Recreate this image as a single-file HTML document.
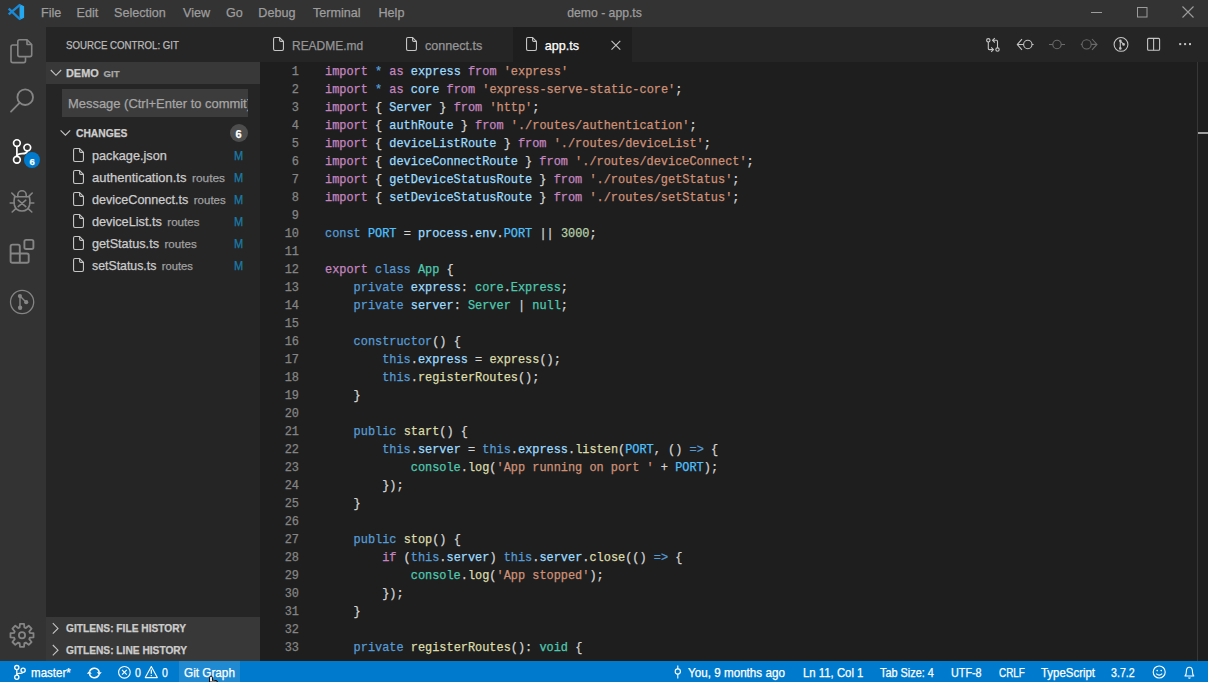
<!DOCTYPE html>
<html><head><meta charset="utf-8"><style>
html,body{margin:0;padding:0;width:1208px;height:682px;overflow:hidden;background:#1E1E1E}
.r{position:absolute;display:block;overflow:visible}
.t{position:absolute;white-space:pre;-webkit-text-stroke:0.25px currentColor}
</style></head><body>
<div class="r" style="left:0px;top:0px;width:1208px;height:27px;background:#333333;"></div>
<div class="r" style="left:0px;top:27px;width:46px;height:634px;background:#333333;"></div>
<div class="r" style="left:46px;top:27px;width:214px;height:634px;background:#252526;"></div>
<div class="r" style="left:260px;top:27px;width:948px;height:35px;background:#252526;"></div>
<div class="r" style="left:260px;top:62px;width:948px;height:599px;background:#1E1E1E;"></div>
<div class="r" style="left:0px;top:661px;width:1208px;height:21px;background:#007ACC;"></div>
<svg class="r" style="left:0px;top:0px;" width="40" height="27" viewBox="0 0 40 27">
<path d="M19.5 4 L24.1 6.3 V17.8 L19.5 20.1 Z" fill="#24A8F0"/>
<path d="M20.2 4.6 L8.7 14.3 M8.7 8.7 L20.2 19.5" stroke="#1A8AD8" stroke-width="2.4"/>
</svg>
<div class="t" style="left:41px;top:4.23px;font-size:12.6px;line-height:18px;color:#9D9D9D;font-weight:400;font-family:'Liberation Sans', sans-serif;">File</div>
<div class="t" style="left:76.5px;top:4.23px;font-size:12.6px;line-height:18px;color:#9D9D9D;font-weight:400;font-family:'Liberation Sans', sans-serif;">Edit</div>
<div class="t" style="left:114px;top:4.23px;font-size:12.6px;line-height:18px;color:#9D9D9D;font-weight:400;font-family:'Liberation Sans', sans-serif;">Selection</div>
<div class="t" style="left:183px;top:4.23px;font-size:12.6px;line-height:18px;color:#9D9D9D;font-weight:400;font-family:'Liberation Sans', sans-serif;">View</div>
<div class="t" style="left:226px;top:4.23px;font-size:12.6px;line-height:18px;color:#9D9D9D;font-weight:400;font-family:'Liberation Sans', sans-serif;">Go</div>
<div class="t" style="left:258.3px;top:4.23px;font-size:12.6px;line-height:18px;color:#9D9D9D;font-weight:400;font-family:'Liberation Sans', sans-serif;">Debug</div>
<div class="t" style="left:313px;top:4.23px;font-size:12.6px;line-height:18px;color:#9D9D9D;font-weight:400;font-family:'Liberation Sans', sans-serif;">Terminal</div>
<div class="t" style="left:378.5px;top:4.23px;font-size:12.6px;line-height:18px;color:#9D9D9D;font-weight:400;font-family:'Liberation Sans', sans-serif;">Help</div>
<div class="t" style="left:567.3px;top:4.87px;font-size:12.2px;line-height:17px;color:#9D9D9D;font-weight:400;font-family:'Liberation Sans', sans-serif;">demo - app.ts</div>
<svg class="r" style="left:1080px;top:0px;" width="128" height="27" viewBox="1080 0 128 27">
<path d="M1091 12.5 H1102" stroke="#9D9D9D" stroke-width="1"/>
<rect x="1137.5" y="7.5" width="9.5" height="9.5" fill="none" stroke="#9D9D9D" stroke-width="1"/>
<path d="M1182.5 6.5 L1193.5 17.5 M1193.5 6.5 L1182.5 17.5" stroke="#9D9D9D" stroke-width="1.1"/>
</svg>
<svg class="r" style="left:0px;top:27px;" width="46" height="634" viewBox="0 27 46 634">
<g fill="none" stroke="#858585" stroke-width="1.6" stroke-linejoin="round">
  <path d="M17.5 45 H12.8 Q11 45 11 46.8 V60.8 Q11 62.6 12.8 62.6 H23.7 Q25.5 62.6 25.5 60.8 V57.2"/>
  <path d="M19.6 39.8 H27 L31.7 44.5 V54.8 Q31.7 56.6 29.9 56.6 H19.6 Q17.8 56.6 17.8 54.8 V41.6 Q17.8 39.8 19.6 39.8 Z"/>
  <path d="M27 39.8 V44.5 H31.7" />
</g>
<g fill="none" stroke="#858585" stroke-width="1.8">
  <circle cx="25.2" cy="97.2" r="7.8"/>
  <path d="M19.8 102.6 L11 111.6" stroke-linecap="round"/>
</g>
<g fill="none" stroke="#FFFFFF" stroke-width="1.7">
  <circle cx="16.9" cy="143.1" r="3.35"/>
  <circle cx="27.3" cy="147.6" r="3.35"/>
  <circle cx="16.9" cy="159.8" r="3.35"/>
  <path d="M16.9 146.5 V156.4"/>
  <path d="M27.3 151 Q26.8 153.6 22 153.7 Q17.6 153.8 16.9 156"/>
</g>
<circle cx="31.95" cy="160" r="8" fill="#007ACC"/>
<g fill="none" stroke="#858585" stroke-width="1.6" stroke-linecap="round">
  <path d="M17.8 196.6 V195 A4.2 4.2 0 0 1 26.2 195 V196.6"/>
  <path d="M14.6 196.8 H29.4 Q30.4 201 29.6 205 Q28.2 211 22 211 Q15.8 211 14.4 205 Q13.6 201 14.6 196.8 Z" stroke-linejoin="round"/>
  <path d="M18.2 200.2 L25.8 206.6 M25.8 200.2 L18.2 206.6"/>
  <path d="M11.8 193 L15.2 196.4 M32.2 193 L28.8 196.4 M10.2 203 H13.8 M33.8 203 H30.2 M12.2 212 L15.8 208.6 M31.8 212 L28.2 208.6"/>
</g>
<g fill="none" stroke="#858585" stroke-width="1.9" stroke-linejoin="round">
  <path d="M12.5 244.6 H18 Q19.8 244.6 19.8 246.4 V253.5 H26.9 Q28.7 253.5 28.7 255.3 V261 Q28.7 262.8 26.9 262.8 H12.5 Q10.6 262.8 10.6 261 V246.4 Q10.6 244.6 12.5 244.6 Z"/>
  <path d="M10.6 253.5 H19.8 V262.8"/>
  <rect x="24.4" y="239.9" width="9" height="9.1" rx="1.8"/>
</g>
<g fill="none" stroke="#858585">
  <circle cx="22.1" cy="302" r="11.6" stroke-width="1.3"/>
  <path d="M20 296.1 V307.8 M20 296.1 L26.2 302.2" stroke-width="1.4"/>
</g>
<g fill="#858585">
  <circle cx="19.9" cy="296.1" r="2.1"/>
  <circle cx="26.2" cy="302.2" r="2.1"/>
  <circle cx="20.1" cy="307.8" r="2.2"/>
</g>
</svg>
<div class="t" style="left:29.6px;top:154.71px;font-size:9.5px;line-height:13px;color:#FFFFFF;font-weight:700;font-family:'Liberation Sans', sans-serif;">6</div>
<svg class="r" style="left:0px;top:600px;" width="46" height="60" viewBox="0 600 46 60">
<path d="M19.60 627.46 L19.97 623.78 L24.03 623.78 L24.40 627.46 L25.85 628.06 L28.71 625.72 L31.58 628.59 L29.24 631.45 L29.84 632.90 L33.52 633.27 L33.52 637.33 L29.84 637.70 L29.24 639.15 L31.58 642.01 L28.71 644.88 L25.85 642.54 L24.40 643.14 L24.03 646.82 L19.97 646.82 L19.60 643.14 L18.15 642.54 L15.29 644.88 L12.42 642.01 L14.76 639.15 L14.16 637.70 L10.48 637.33 L10.48 633.27 L14.16 632.90 L14.76 631.45 L12.42 628.59 L15.29 625.72 L18.15 628.06 Z" fill="none" stroke="#858585" stroke-width="1.8" stroke-linejoin="round"/>
<circle cx="22" cy="635.3" r="3.1" fill="none" stroke="#858585" stroke-width="1.8"/>
</svg>
<div class="t" style="left:66px;top:37.32px;font-size:11.2px;line-height:16px;color:#BBBBBB;font-weight:400;font-family:'Liberation Sans', sans-serif;transform:scaleX(0.865);transform-origin:0 0;">SOURCE CONTROL: GIT</div>
<div class="r" style="left:46px;top:62px;width:214px;height:22px;background:#383838;"></div>
<svg class="r" style="left:46px;top:62px;" width="214" height="22" viewBox="46 62 214 22"><path d="M50.8 70 L56 75.3 L61.2 70" fill="none" stroke="#C5C5C5" stroke-width="1.1"/></svg>
<div class="t" style="left:66px;top:66.32px;font-size:10.9px;line-height:15px;color:#CCCCCC;font-weight:700;font-family:'Liberation Sans', sans-serif;">DEMO</div>
<div class="t" style="left:103.5px;top:66.97px;font-size:9.6px;line-height:13px;color:#A8A8A8;font-weight:700;font-family:'Liberation Sans', sans-serif;">GIT</div>
<div class="r" style="left:62px;top:89px;width:186px;height:28px;background:#3C3C3C;"></div>
<div class="r" style="left:62px;top:89px;width:186px;height:28px;overflow:hidden">
<div class="t" style="left:5.5px;top:5.70px;font-size:12.7px;line-height:18px;color:#A6A6A6;font-weight:400;font-family:'Liberation Sans', sans-serif;transform:scaleX(1.02);transform-origin:0 0;">Message (Ctrl+Enter to commit)</div>
</div>
<svg class="r" style="left:46px;top:122px;" width="214" height="22" viewBox="46 122 214 22"><path d="M60.6 130.4 L65.4 135.2 L70.2 130.4" fill="none" stroke="#C5C5C5" stroke-width="1.1"/><circle cx="239" cy="133" r="9" fill="#4D4D4D"/></svg>
<div class="t" style="left:76px;top:127.03px;font-size:10.3px;line-height:14px;color:#CCCCCC;font-weight:700;font-family:'Liberation Sans', sans-serif;">CHANGES</div>
<div class="t" style="left:235.6px;top:126.59px;font-size:11px;line-height:15px;color:#FFFFFF;font-weight:700;font-family:'Liberation Sans', sans-serif;">6</div>
<div class="t" style="left:92px;top:146.80px;font-size:12.7px;line-height:18px;color:#CCCCCC;font-weight:400;font-family:'Liberation Sans', sans-serif;transform:scaleX(1);transform-origin:0 0;">package.json</div>
<div class="t" style="left:233.8px;top:147.06px;font-size:12.8px;line-height:18px;color:#1A7DA6;font-weight:400;font-family:'Liberation Sans', sans-serif;transform:scaleX(0.86);transform-origin:0 0;">M</div>
<div class="t" style="left:92px;top:168.80px;font-size:12.7px;line-height:18px;color:#CCCCCC;font-weight:400;font-family:'Liberation Sans', sans-serif;transform:scaleX(1.022);transform-origin:0 0;">authentication.ts<span style="font-size:11.6px;color:#A0A0A0;margin-left:5.5px">routes</span></div>
<div class="t" style="left:233.8px;top:169.06px;font-size:12.8px;line-height:18px;color:#1A7DA6;font-weight:400;font-family:'Liberation Sans', sans-serif;transform:scaleX(0.86);transform-origin:0 0;">M</div>
<div class="t" style="left:92px;top:190.80px;font-size:12.7px;line-height:18px;color:#CCCCCC;font-weight:400;font-family:'Liberation Sans', sans-serif;transform:scaleX(0.99);transform-origin:0 0;">deviceConnect.ts<span style="font-size:11.6px;color:#A0A0A0;margin-left:5.5px">routes</span></div>
<div class="t" style="left:233.8px;top:191.06px;font-size:12.8px;line-height:18px;color:#1A7DA6;font-weight:400;font-family:'Liberation Sans', sans-serif;transform:scaleX(0.86);transform-origin:0 0;">M</div>
<div class="t" style="left:92px;top:212.80px;font-size:12.7px;line-height:18px;color:#CCCCCC;font-weight:400;font-family:'Liberation Sans', sans-serif;transform:scaleX(1);transform-origin:0 0;">deviceList.ts<span style="font-size:11.6px;color:#A0A0A0;margin-left:5.5px">routes</span></div>
<div class="t" style="left:233.8px;top:213.06px;font-size:12.8px;line-height:18px;color:#1A7DA6;font-weight:400;font-family:'Liberation Sans', sans-serif;transform:scaleX(0.86);transform-origin:0 0;">M</div>
<div class="t" style="left:92px;top:234.80px;font-size:12.7px;line-height:18px;color:#CCCCCC;font-weight:400;font-family:'Liberation Sans', sans-serif;transform:scaleX(1);transform-origin:0 0;">getStatus.ts<span style="font-size:11.6px;color:#A0A0A0;margin-left:5.5px">routes</span></div>
<div class="t" style="left:233.8px;top:235.06px;font-size:12.8px;line-height:18px;color:#1A7DA6;font-weight:400;font-family:'Liberation Sans', sans-serif;transform:scaleX(0.86);transform-origin:0 0;">M</div>
<div class="t" style="left:92px;top:256.80px;font-size:12.7px;line-height:18px;color:#CCCCCC;font-weight:400;font-family:'Liberation Sans', sans-serif;transform:scaleX(0.97);transform-origin:0 0;">setStatus.ts<span style="font-size:11.6px;color:#A0A0A0;margin-left:5.5px">routes</span></div>
<div class="t" style="left:233.8px;top:257.06px;font-size:12.8px;line-height:18px;color:#1A7DA6;font-weight:400;font-family:'Liberation Sans', sans-serif;transform:scaleX(0.86);transform-origin:0 0;">M</div>
<svg class="r" style="left:46px;top:140px;" width="214" height="140" viewBox="46 140 214 140"><path d="M74.9 148.55 H79.6 L83.45 152.4 V160.1 Q83.45 161.45 82.1 161.45 H74.9 Q73.55 161.45 73.55 160.1 V149.9 Q73.55 148.55 74.9 148.55 Z" fill="none" stroke="#C5C5C5" stroke-width="1.1" stroke-linejoin="round"/><path d="M79.6 148.55 V151.3 Q79.6 152.4 80.7 152.4 H83.45" fill="none" stroke="#C5C5C5" stroke-width="1.1"/><path d="M74.9 170.55 H79.6 L83.45 174.4 V182.1 Q83.45 183.45 82.1 183.45 H74.9 Q73.55 183.45 73.55 182.1 V171.9 Q73.55 170.55 74.9 170.55 Z" fill="none" stroke="#C5C5C5" stroke-width="1.1" stroke-linejoin="round"/><path d="M79.6 170.55 V173.3 Q79.6 174.4 80.7 174.4 H83.45" fill="none" stroke="#C5C5C5" stroke-width="1.1"/><path d="M74.9 192.55 H79.6 L83.45 196.4 V204.1 Q83.45 205.45 82.1 205.45 H74.9 Q73.55 205.45 73.55 204.1 V193.9 Q73.55 192.55 74.9 192.55 Z" fill="none" stroke="#C5C5C5" stroke-width="1.1" stroke-linejoin="round"/><path d="M79.6 192.55 V195.3 Q79.6 196.4 80.7 196.4 H83.45" fill="none" stroke="#C5C5C5" stroke-width="1.1"/><path d="M74.9 214.55 H79.6 L83.45 218.4 V226.1 Q83.45 227.45 82.1 227.45 H74.9 Q73.55 227.45 73.55 226.1 V215.9 Q73.55 214.55 74.9 214.55 Z" fill="none" stroke="#C5C5C5" stroke-width="1.1" stroke-linejoin="round"/><path d="M79.6 214.55 V217.3 Q79.6 218.4 80.7 218.4 H83.45" fill="none" stroke="#C5C5C5" stroke-width="1.1"/><path d="M74.9 236.55 H79.6 L83.45 240.4 V248.1 Q83.45 249.45 82.1 249.45 H74.9 Q73.55 249.45 73.55 248.1 V237.9 Q73.55 236.55 74.9 236.55 Z" fill="none" stroke="#C5C5C5" stroke-width="1.1" stroke-linejoin="round"/><path d="M79.6 236.55 V239.3 Q79.6 240.4 80.7 240.4 H83.45" fill="none" stroke="#C5C5C5" stroke-width="1.1"/><path d="M74.9 258.55 H79.6 L83.45 262.4 V270.1 Q83.45 271.45 82.1 271.45 H74.9 Q73.55 271.45 73.55 270.1 V259.9 Q73.55 258.55 74.9 258.55 Z" fill="none" stroke="#C5C5C5" stroke-width="1.1" stroke-linejoin="round"/><path d="M79.6 258.55 V261.3 Q79.6 262.4 80.7 262.4 H83.45" fill="none" stroke="#C5C5C5" stroke-width="1.1"/></svg>
<div class="r" style="left:46px;top:617px;width:214px;height:44px;background:#383838;"></div>
<svg class="r" style="left:46px;top:610px;" width="214" height="51" viewBox="46 610 214 51"><path d="M52.8 623.2 L58 628.4 L52.8 633.6 M52.8 645 L58 650.2 L52.8 655.4" fill="none" stroke="#C5C5C5" stroke-width="1.1"/></svg>
<div class="t" style="left:66px;top:621.96px;font-size:10.2px;line-height:14px;color:#CCCCCC;font-weight:700;font-family:'Liberation Sans', sans-serif;">GITLENS: FILE HISTORY</div>
<div class="t" style="left:66px;top:643.76px;font-size:10.2px;line-height:14px;color:#CCCCCC;font-weight:700;font-family:'Liberation Sans', sans-serif;">GITLENS: LINE HISTORY</div>
<div class="r" style="left:513px;top:27px;width:119px;height:35px;background:#1E1E1E;"></div>
<svg class="r" style="left:260px;top:27px;" width="400" height="35" viewBox="260 27 400 35"><path d="M274.9 37.55 H279.6 L283.45 41.4 V49.1 Q283.45 50.45 282.1 50.45 H274.9 Q273.55 50.45 273.55 49.1 V38.9 Q273.55 37.55 274.9 37.55 Z" fill="none" stroke="#C5C5C5" stroke-width="1.1" stroke-linejoin="round"/><path d="M279.6 37.55 V40.3 Q279.6 41.4 280.7 41.4 H283.45" fill="none" stroke="#C5C5C5" stroke-width="1.1"/><path d="M407.9 37.55 H412.6 L416.45 41.4 V49.1 Q416.45 50.45 415.1 50.45 H407.9 Q406.55 50.45 406.55 49.1 V38.9 Q406.55 37.55 407.9 37.55 Z" fill="none" stroke="#C5C5C5" stroke-width="1.1" stroke-linejoin="round"/><path d="M412.6 37.55 V40.3 Q412.6 41.4 413.7 41.4 H416.45" fill="none" stroke="#C5C5C5" stroke-width="1.1"/><path d="M527.9 37.55 H532.6 L536.45 41.4 V49.1 Q536.45 50.45 535.1 50.45 H527.9 Q526.55 50.45 526.55 49.1 V38.9 Q526.55 37.55 527.9 37.55 Z" fill="none" stroke="#C5C5C5" stroke-width="1.1" stroke-linejoin="round"/><path d="M532.6 37.55 V40.3 Q532.6 41.4 533.7 41.4 H536.45" fill="none" stroke="#C5C5C5" stroke-width="1.1"/><path d="M611.5 40.8 L620.3 49.6 M620.3 40.8 L611.5 49.6" stroke="#C5C5C5" stroke-width="1.1"/></svg>
<div class="t" style="left:292.2px;top:36.93px;font-size:12.6px;line-height:18px;color:#969696;font-weight:400;font-family:'Liberation Sans', sans-serif;transform:scaleX(0.95);transform-origin:0 0;">README.md</div>
<div class="t" style="left:425px;top:36.93px;font-size:12.6px;line-height:18px;color:#969696;font-weight:400;font-family:'Liberation Sans', sans-serif;">connect.ts</div>
<div class="t" style="left:544.8px;top:36.93px;font-size:12.6px;line-height:18px;color:#FFFFFF;font-weight:400;font-family:'Liberation Sans', sans-serif;">app.ts</div>
<svg class="r" style="left:970px;top:27px;" width="238" height="35" viewBox="970 27 238 35">
<g fill="none" stroke="#C5C5C5" stroke-width="1.1">
  <circle cx="988.3" cy="40.3" r="1.7"/>
  <circle cx="997.5" cy="49.6" r="1.7"/>
  <path d="M988.3 42 V48.6 Q988.3 49.6 989.3 49.6 H993.4"/>
  <path d="M991.2 47.4 L993.4 49.6 L991.2 51.8"/>
  <path d="M997.5 47.9 V41.3 Q997.5 40.3 996.5 40.3 H992.6"/>
  <path d="M994.8 38.1 L992.6 40.3 L994.8 42.5"/>
</g>
<g fill="none" stroke="#C5C5C5" stroke-width="1.1">
  <circle cx="1027.8" cy="44.5" r="4.2"/>
  <path d="M1017.5 44.5 H1023.6 M1032 44.5 H1033.6 M1022 39.2 L1017.3 44.5 L1022 49.8"/>
</g>
<g fill="none" stroke="#6A6A6A" stroke-width="1.1">
  <circle cx="1057" cy="44.5" r="4.2"/>
  <path d="M1049 44.5 H1052.8 M1061.2 44.5 H1065"/>
  <circle cx="1086.6" cy="44.4" r="4.6"/>
  <path d="M1080.8 44.4 H1082 M1091.2 44.4 H1096.8 M1092 39 L1097 44.4 L1092 49.8"/>
</g>
<g fill="none" stroke="#C5C5C5" stroke-width="1.1">
  <circle cx="1121" cy="44.4" r="6.9"/>
  <path d="M1120.3 40.8 V48.4 M1120.3 40.8 L1123.6 44.4"/>
  <rect x="1147.6" y="38.4" width="12" height="11.8" rx="1"/>
  <path d="M1153.6 38.4 V50.2"/>
</g>
<g fill="#C5C5C5">
  <circle cx="1120.3" cy="40.8" r="1.3"/><circle cx="1123.6" cy="44.4" r="1.3"/><circle cx="1120.3" cy="48.4" r="1.3"/>
  <rect x="1179.2" y="43.1" width="2" height="2"/><rect x="1184.1" y="43.1" width="2" height="2"/><rect x="1189" y="43.1" width="2" height="2"/>
</g>
</svg>
<div class="r" style="left:1197px;top:62px;width:1px;height:599px;background:#373737;"></div>
<div class="r" style="left:1198px;top:132px;width:10px;height:2px;background:#A0A0A0;"></div>
<div class="r" style="left:260px;top:62px;width:937px;height:599px;overflow:hidden">
<div class="t" style="left:31.853px;top:1.93px;font-size:11.91px;line-height:17px;color:#858585;font-weight:400;font-family:'Liberation Mono', monospace;">1</div>
<div class="t" style="left:65px;top:1.93px;font-size:11.91px;line-height:17px;color:#D4D4D4;font-weight:400;font-family:'Liberation Mono', monospace;"><span style="color:#C586C0">import</span><span style="color:#D4D4D4"> </span><span style="color:#569CD6">*</span><span style="color:#D4D4D4"> </span><span style="color:#C586C0">as</span><span style="color:#D4D4D4"> </span><span style="color:#9CDCFE">express</span><span style="color:#D4D4D4"> </span><span style="color:#C586C0">from</span><span style="color:#D4D4D4"> </span><span style="color:#CE9178">'express'</span></div>
<div class="t" style="left:31.853px;top:19.93px;font-size:11.91px;line-height:17px;color:#858585;font-weight:400;font-family:'Liberation Mono', monospace;">2</div>
<div class="t" style="left:65px;top:19.93px;font-size:11.91px;line-height:17px;color:#D4D4D4;font-weight:400;font-family:'Liberation Mono', monospace;"><span style="color:#C586C0">import</span><span style="color:#D4D4D4"> </span><span style="color:#569CD6">*</span><span style="color:#D4D4D4"> </span><span style="color:#C586C0">as</span><span style="color:#D4D4D4"> </span><span style="color:#9CDCFE">core</span><span style="color:#D4D4D4"> </span><span style="color:#C586C0">from</span><span style="color:#D4D4D4"> </span><span style="color:#CE9178">'express-serve-static-core'</span><span style="color:#D4D4D4">;</span></div>
<div class="t" style="left:31.853px;top:37.93px;font-size:11.91px;line-height:17px;color:#858585;font-weight:400;font-family:'Liberation Mono', monospace;">3</div>
<div class="t" style="left:65px;top:37.93px;font-size:11.91px;line-height:17px;color:#D4D4D4;font-weight:400;font-family:'Liberation Mono', monospace;"><span style="color:#C586C0">import</span><span style="color:#D4D4D4"> { </span><span style="color:#9CDCFE">Server</span><span style="color:#D4D4D4"> } </span><span style="color:#C586C0">from</span><span style="color:#D4D4D4"> </span><span style="color:#CE9178">'http'</span><span style="color:#D4D4D4">;</span></div>
<div class="t" style="left:31.853px;top:55.93px;font-size:11.91px;line-height:17px;color:#858585;font-weight:400;font-family:'Liberation Mono', monospace;">4</div>
<div class="t" style="left:65px;top:55.93px;font-size:11.91px;line-height:17px;color:#D4D4D4;font-weight:400;font-family:'Liberation Mono', monospace;"><span style="color:#C586C0">import</span><span style="color:#D4D4D4"> { </span><span style="color:#9CDCFE">authRoute</span><span style="color:#D4D4D4"> } </span><span style="color:#C586C0">from</span><span style="color:#D4D4D4"> </span><span style="color:#CE9178">'./routes/authentication'</span><span style="color:#D4D4D4">;</span></div>
<div class="t" style="left:31.853px;top:73.93px;font-size:11.91px;line-height:17px;color:#858585;font-weight:400;font-family:'Liberation Mono', monospace;">5</div>
<div class="t" style="left:65px;top:73.93px;font-size:11.91px;line-height:17px;color:#D4D4D4;font-weight:400;font-family:'Liberation Mono', monospace;"><span style="color:#C586C0">import</span><span style="color:#D4D4D4"> { </span><span style="color:#9CDCFE">deviceListRoute</span><span style="color:#D4D4D4"> } </span><span style="color:#C586C0">from</span><span style="color:#D4D4D4"> </span><span style="color:#CE9178">'./routes/deviceList'</span><span style="color:#D4D4D4">;</span></div>
<div class="t" style="left:31.853px;top:91.93px;font-size:11.91px;line-height:17px;color:#858585;font-weight:400;font-family:'Liberation Mono', monospace;">6</div>
<div class="t" style="left:65px;top:91.93px;font-size:11.91px;line-height:17px;color:#D4D4D4;font-weight:400;font-family:'Liberation Mono', monospace;"><span style="color:#C586C0">import</span><span style="color:#D4D4D4"> { </span><span style="color:#9CDCFE">deviceConnectRoute</span><span style="color:#D4D4D4"> } </span><span style="color:#C586C0">from</span><span style="color:#D4D4D4"> </span><span style="color:#CE9178">'./routes/deviceConnect'</span><span style="color:#D4D4D4">;</span></div>
<div class="t" style="left:31.853px;top:109.93px;font-size:11.91px;line-height:17px;color:#858585;font-weight:400;font-family:'Liberation Mono', monospace;">7</div>
<div class="t" style="left:65px;top:109.93px;font-size:11.91px;line-height:17px;color:#D4D4D4;font-weight:400;font-family:'Liberation Mono', monospace;"><span style="color:#C586C0">import</span><span style="color:#D4D4D4"> { </span><span style="color:#9CDCFE">getDeviceStatusRoute</span><span style="color:#D4D4D4"> } </span><span style="color:#C586C0">from</span><span style="color:#D4D4D4"> </span><span style="color:#CE9178">'./routes/getStatus'</span><span style="color:#D4D4D4">;</span></div>
<div class="t" style="left:31.853px;top:127.93px;font-size:11.91px;line-height:17px;color:#858585;font-weight:400;font-family:'Liberation Mono', monospace;">8</div>
<div class="t" style="left:65px;top:127.93px;font-size:11.91px;line-height:17px;color:#D4D4D4;font-weight:400;font-family:'Liberation Mono', monospace;"><span style="color:#C586C0">import</span><span style="color:#D4D4D4"> { </span><span style="color:#9CDCFE">setDeviceStatusRoute</span><span style="color:#D4D4D4"> } </span><span style="color:#C586C0">from</span><span style="color:#D4D4D4"> </span><span style="color:#CE9178">'./routes/setStatus'</span><span style="color:#D4D4D4">;</span></div>
<div class="t" style="left:31.853px;top:145.93px;font-size:11.91px;line-height:17px;color:#858585;font-weight:400;font-family:'Liberation Mono', monospace;">9</div>
<div class="t" style="left:24.706px;top:163.93px;font-size:11.91px;line-height:17px;color:#858585;font-weight:400;font-family:'Liberation Mono', monospace;">10</div>
<div class="t" style="left:65px;top:163.93px;font-size:11.91px;line-height:17px;color:#D4D4D4;font-weight:400;font-family:'Liberation Mono', monospace;"><span style="color:#569CD6">const</span><span style="color:#D4D4D4"> </span><span style="color:#4FC1FF">PORT</span><span style="color:#D4D4D4"> = </span><span style="color:#9CDCFE">process</span><span style="color:#D4D4D4">.</span><span style="color:#9CDCFE">env</span><span style="color:#D4D4D4">.</span><span style="color:#4FC1FF">PORT</span><span style="color:#D4D4D4"> || </span><span style="color:#B5CEA8">3000</span><span style="color:#D4D4D4">;</span></div>
<div class="t" style="left:24.706px;top:181.93px;font-size:11.91px;line-height:17px;color:#858585;font-weight:400;font-family:'Liberation Mono', monospace;">11</div>
<div class="t" style="left:24.706px;top:199.93px;font-size:11.91px;line-height:17px;color:#858585;font-weight:400;font-family:'Liberation Mono', monospace;">12</div>
<div class="t" style="left:65px;top:199.93px;font-size:11.91px;line-height:17px;color:#D4D4D4;font-weight:400;font-family:'Liberation Mono', monospace;"><span style="color:#C586C0">export</span><span style="color:#D4D4D4"> </span><span style="color:#569CD6">class</span><span style="color:#D4D4D4"> </span><span style="color:#4EC9B0">App</span><span style="color:#D4D4D4"> {</span></div>
<div class="t" style="left:24.706px;top:217.93px;font-size:11.91px;line-height:17px;color:#858585;font-weight:400;font-family:'Liberation Mono', monospace;">13</div>
<div class="t" style="left:65px;top:217.93px;font-size:11.91px;line-height:17px;color:#D4D4D4;font-weight:400;font-family:'Liberation Mono', monospace;"><span style="color:#D4D4D4">    </span><span style="color:#569CD6">private</span><span style="color:#D4D4D4"> </span><span style="color:#9CDCFE">express</span><span style="color:#D4D4D4">: </span><span style="color:#4EC9B0">core</span><span style="color:#D4D4D4">.</span><span style="color:#4EC9B0">Express</span><span style="color:#D4D4D4">;</span></div>
<div class="t" style="left:24.706px;top:235.93px;font-size:11.91px;line-height:17px;color:#858585;font-weight:400;font-family:'Liberation Mono', monospace;">14</div>
<div class="t" style="left:65px;top:235.93px;font-size:11.91px;line-height:17px;color:#D4D4D4;font-weight:400;font-family:'Liberation Mono', monospace;"><span style="color:#D4D4D4">    </span><span style="color:#569CD6">private</span><span style="color:#D4D4D4"> </span><span style="color:#9CDCFE">server</span><span style="color:#D4D4D4">: </span><span style="color:#4EC9B0">Server</span><span style="color:#D4D4D4"> | </span><span style="color:#4EC9B0">null</span><span style="color:#D4D4D4">;</span></div>
<div class="t" style="left:24.706px;top:253.93px;font-size:11.91px;line-height:17px;color:#858585;font-weight:400;font-family:'Liberation Mono', monospace;">15</div>
<div class="t" style="left:24.706px;top:271.93px;font-size:11.91px;line-height:17px;color:#858585;font-weight:400;font-family:'Liberation Mono', monospace;">16</div>
<div class="t" style="left:65px;top:271.93px;font-size:11.91px;line-height:17px;color:#D4D4D4;font-weight:400;font-family:'Liberation Mono', monospace;"><span style="color:#D4D4D4">    </span><span style="color:#569CD6">constructor</span><span style="color:#D4D4D4">() {</span></div>
<div class="t" style="left:24.706px;top:289.93px;font-size:11.91px;line-height:17px;color:#858585;font-weight:400;font-family:'Liberation Mono', monospace;">17</div>
<div class="t" style="left:65px;top:289.93px;font-size:11.91px;line-height:17px;color:#D4D4D4;font-weight:400;font-family:'Liberation Mono', monospace;"><span style="color:#D4D4D4">        </span><span style="color:#569CD6">this</span><span style="color:#D4D4D4">.</span><span style="color:#9CDCFE">express</span><span style="color:#D4D4D4"> = </span><span style="color:#DCDCAA">express</span><span style="color:#D4D4D4">();</span></div>
<div class="t" style="left:24.706px;top:307.93px;font-size:11.91px;line-height:17px;color:#858585;font-weight:400;font-family:'Liberation Mono', monospace;">18</div>
<div class="t" style="left:65px;top:307.93px;font-size:11.91px;line-height:17px;color:#D4D4D4;font-weight:400;font-family:'Liberation Mono', monospace;"><span style="color:#D4D4D4">        </span><span style="color:#569CD6">this</span><span style="color:#D4D4D4">.</span><span style="color:#DCDCAA">registerRoutes</span><span style="color:#D4D4D4">();</span></div>
<div class="t" style="left:24.706px;top:325.93px;font-size:11.91px;line-height:17px;color:#858585;font-weight:400;font-family:'Liberation Mono', monospace;">19</div>
<div class="t" style="left:65px;top:325.93px;font-size:11.91px;line-height:17px;color:#D4D4D4;font-weight:400;font-family:'Liberation Mono', monospace;"><span style="color:#D4D4D4">    }</span></div>
<div class="t" style="left:24.706px;top:343.93px;font-size:11.91px;line-height:17px;color:#858585;font-weight:400;font-family:'Liberation Mono', monospace;">20</div>
<div class="t" style="left:24.706px;top:361.93px;font-size:11.91px;line-height:17px;color:#858585;font-weight:400;font-family:'Liberation Mono', monospace;">21</div>
<div class="t" style="left:65px;top:361.93px;font-size:11.91px;line-height:17px;color:#D4D4D4;font-weight:400;font-family:'Liberation Mono', monospace;"><span style="color:#D4D4D4">    </span><span style="color:#569CD6">public</span><span style="color:#D4D4D4"> </span><span style="color:#DCDCAA">start</span><span style="color:#D4D4D4">() {</span></div>
<div class="t" style="left:24.706px;top:379.93px;font-size:11.91px;line-height:17px;color:#858585;font-weight:400;font-family:'Liberation Mono', monospace;">22</div>
<div class="t" style="left:65px;top:379.93px;font-size:11.91px;line-height:17px;color:#D4D4D4;font-weight:400;font-family:'Liberation Mono', monospace;"><span style="color:#D4D4D4">        </span><span style="color:#569CD6">this</span><span style="color:#D4D4D4">.</span><span style="color:#9CDCFE">server</span><span style="color:#D4D4D4"> = </span><span style="color:#569CD6">this</span><span style="color:#D4D4D4">.</span><span style="color:#9CDCFE">express</span><span style="color:#D4D4D4">.</span><span style="color:#DCDCAA">listen</span><span style="color:#D4D4D4">(</span><span style="color:#4FC1FF">PORT</span><span style="color:#D4D4D4">, () </span><span style="color:#569CD6">=&gt;</span><span style="color:#D4D4D4"> {</span></div>
<div class="t" style="left:24.706px;top:397.93px;font-size:11.91px;line-height:17px;color:#858585;font-weight:400;font-family:'Liberation Mono', monospace;">23</div>
<div class="t" style="left:65px;top:397.93px;font-size:11.91px;line-height:17px;color:#D4D4D4;font-weight:400;font-family:'Liberation Mono', monospace;"><span style="color:#D4D4D4">            </span><span style="color:#4EC9B0">console</span><span style="color:#D4D4D4">.</span><span style="color:#DCDCAA">log</span><span style="color:#D4D4D4">(</span><span style="color:#CE9178">'App running on port '</span><span style="color:#D4D4D4"> + </span><span style="color:#4FC1FF">PORT</span><span style="color:#D4D4D4">);</span></div>
<div class="t" style="left:24.706px;top:415.93px;font-size:11.91px;line-height:17px;color:#858585;font-weight:400;font-family:'Liberation Mono', monospace;">24</div>
<div class="t" style="left:65px;top:415.93px;font-size:11.91px;line-height:17px;color:#D4D4D4;font-weight:400;font-family:'Liberation Mono', monospace;"><span style="color:#D4D4D4">        });</span></div>
<div class="t" style="left:24.706px;top:433.93px;font-size:11.91px;line-height:17px;color:#858585;font-weight:400;font-family:'Liberation Mono', monospace;">25</div>
<div class="t" style="left:65px;top:433.93px;font-size:11.91px;line-height:17px;color:#D4D4D4;font-weight:400;font-family:'Liberation Mono', monospace;"><span style="color:#D4D4D4">    }</span></div>
<div class="t" style="left:24.706px;top:451.93px;font-size:11.91px;line-height:17px;color:#858585;font-weight:400;font-family:'Liberation Mono', monospace;">26</div>
<div class="t" style="left:24.706px;top:469.93px;font-size:11.91px;line-height:17px;color:#858585;font-weight:400;font-family:'Liberation Mono', monospace;">27</div>
<div class="t" style="left:65px;top:469.93px;font-size:11.91px;line-height:17px;color:#D4D4D4;font-weight:400;font-family:'Liberation Mono', monospace;"><span style="color:#D4D4D4">    </span><span style="color:#569CD6">public</span><span style="color:#D4D4D4"> </span><span style="color:#DCDCAA">stop</span><span style="color:#D4D4D4">() {</span></div>
<div class="t" style="left:24.706px;top:487.93px;font-size:11.91px;line-height:17px;color:#858585;font-weight:400;font-family:'Liberation Mono', monospace;">28</div>
<div class="t" style="left:65px;top:487.93px;font-size:11.91px;line-height:17px;color:#D4D4D4;font-weight:400;font-family:'Liberation Mono', monospace;"><span style="color:#D4D4D4">        </span><span style="color:#C586C0">if</span><span style="color:#D4D4D4"> (</span><span style="color:#569CD6">this</span><span style="color:#D4D4D4">.</span><span style="color:#9CDCFE">server</span><span style="color:#D4D4D4">) </span><span style="color:#569CD6">this</span><span style="color:#D4D4D4">.</span><span style="color:#9CDCFE">server</span><span style="color:#D4D4D4">.</span><span style="color:#DCDCAA">close</span><span style="color:#D4D4D4">(() </span><span style="color:#569CD6">=&gt;</span><span style="color:#D4D4D4"> {</span></div>
<div class="t" style="left:24.706px;top:505.93px;font-size:11.91px;line-height:17px;color:#858585;font-weight:400;font-family:'Liberation Mono', monospace;">29</div>
<div class="t" style="left:65px;top:505.93px;font-size:11.91px;line-height:17px;color:#D4D4D4;font-weight:400;font-family:'Liberation Mono', monospace;"><span style="color:#D4D4D4">            </span><span style="color:#4EC9B0">console</span><span style="color:#D4D4D4">.</span><span style="color:#DCDCAA">log</span><span style="color:#D4D4D4">(</span><span style="color:#CE9178">'App stopped'</span><span style="color:#D4D4D4">);</span></div>
<div class="t" style="left:24.706px;top:523.93px;font-size:11.91px;line-height:17px;color:#858585;font-weight:400;font-family:'Liberation Mono', monospace;">30</div>
<div class="t" style="left:65px;top:523.93px;font-size:11.91px;line-height:17px;color:#D4D4D4;font-weight:400;font-family:'Liberation Mono', monospace;"><span style="color:#D4D4D4">        });</span></div>
<div class="t" style="left:24.706px;top:541.93px;font-size:11.91px;line-height:17px;color:#858585;font-weight:400;font-family:'Liberation Mono', monospace;">31</div>
<div class="t" style="left:65px;top:541.93px;font-size:11.91px;line-height:17px;color:#D4D4D4;font-weight:400;font-family:'Liberation Mono', monospace;"><span style="color:#D4D4D4">    }</span></div>
<div class="t" style="left:24.706px;top:559.93px;font-size:11.91px;line-height:17px;color:#858585;font-weight:400;font-family:'Liberation Mono', monospace;">32</div>
<div class="t" style="left:24.706px;top:577.93px;font-size:11.91px;line-height:17px;color:#858585;font-weight:400;font-family:'Liberation Mono', monospace;">33</div>
<div class="t" style="left:65px;top:577.93px;font-size:11.91px;line-height:17px;color:#D4D4D4;font-weight:400;font-family:'Liberation Mono', monospace;"><span style="color:#D4D4D4">    </span><span style="color:#569CD6">private</span><span style="color:#D4D4D4"> </span><span style="color:#DCDCAA">registerRoutes</span><span style="color:#D4D4D4">(): </span><span style="color:#4EC9B0">void</span><span style="color:#D4D4D4"> {</span></div>
</div>
<div class="r" style="left:179px;top:661px;width:61px;height:21px;background:rgba(255,255,255,0.12);"></div>
<div class="t" style="left:30.6px;top:664.80px;font-size:12.4px;line-height:17px;color:#FFFFFF;font-weight:400;font-family:'Liberation Sans', sans-serif;transform:scaleX(0.933);transform-origin:0 0;">master*</div>
<div class="t" style="left:135px;top:664.80px;font-size:12.4px;line-height:17px;color:#FFFFFF;font-weight:400;font-family:'Liberation Sans', sans-serif;transform:scaleX(0.85);transform-origin:0 0;">0</div>
<div class="t" style="left:161.8px;top:664.80px;font-size:12.4px;line-height:17px;color:#FFFFFF;font-weight:400;font-family:'Liberation Sans', sans-serif;transform:scaleX(0.85);transform-origin:0 0;">0</div>
<div class="t" style="left:184.2px;top:664.80px;font-size:12.4px;line-height:17px;color:#FFFFFF;font-weight:400;font-family:'Liberation Sans', sans-serif;transform:scaleX(0.948);transform-origin:0 0;">Git Graph</div>
<div class="t" style="left:688.3px;top:664.80px;font-size:12.4px;line-height:17px;color:#FFFFFF;font-weight:400;font-family:'Liberation Sans', sans-serif;transform:scaleX(0.942);transform-origin:0 0;">You, 9 months ago</div>
<div class="t" style="left:802.6px;top:664.80px;font-size:12.4px;line-height:17px;color:#FFFFFF;font-weight:400;font-family:'Liberation Sans', sans-serif;transform:scaleX(0.917);transform-origin:0 0;">Ln 11, Col 1</div>
<div class="t" style="left:880.2px;top:664.80px;font-size:12.4px;line-height:17px;color:#FFFFFF;font-weight:400;font-family:'Liberation Sans', sans-serif;transform:scaleX(0.879);transform-origin:0 0;">Tab Size: 4</div>
<div class="t" style="left:951.1px;top:664.80px;font-size:12.4px;line-height:17px;color:#FFFFFF;font-weight:400;font-family:'Liberation Sans', sans-serif;transform:scaleX(0.871);transform-origin:0 0;">UTF-8</div>
<div class="t" style="left:998.8px;top:664.80px;font-size:12.4px;line-height:17px;color:#FFFFFF;font-weight:400;font-family:'Liberation Sans', sans-serif;transform:scaleX(0.8);transform-origin:0 0;">CRLF</div>
<div class="t" style="left:1041px;top:664.80px;font-size:12.4px;line-height:17px;color:#FFFFFF;font-weight:400;font-family:'Liberation Sans', sans-serif;transform:scaleX(0.923);transform-origin:0 0;">TypeScript</div>
<div class="t" style="left:1111.3px;top:664.80px;font-size:12.4px;line-height:17px;color:#FFFFFF;font-weight:400;font-family:'Liberation Sans', sans-serif;transform:scaleX(0.86);transform-origin:0 0;">3.7.2</div>
<svg class="r" style="left:0px;top:661px;" width="1208" height="21" viewBox="0 661 1208 21">
<g fill="none" stroke="#FFFFFF" stroke-width="1.1">
  <circle cx="16.8" cy="667.6" r="2.1" stroke-width="1.3"/><circle cx="16.8" cy="677.3" r="2.1" stroke-width="1.3"/><circle cx="23.1" cy="670.2" r="2.1" stroke-width="1.3"/>
  <path d="M16.8 669.7 V675.2 M23.1 672.3 Q22.6 673.4 20.6 673.4 H19 Q17 673.5 16.8 675.2" stroke-width="1.3"/>
  <path d="M89.6 671.4 A5 5 0 0 1 99.2 672.4 M99.1 674.6 A5 5 0 0 1 89.5 673.6" stroke-width="1.5"/>
  <circle cx="124.4" cy="672.3" r="5.8"/>
  <path d="M122 669.9 L126.8 674.7 M126.8 669.9 L122 674.7"/>
  <path d="M151.3 666.6 L157.3 677.6 H145.3 Z" stroke-linejoin="round"/>
  <circle cx="677.8" cy="671.5" r="2.6"/>
  <path d="M677.8 665.6 V668.9 M677.8 674.1 V678.6"/>
  <circle cx="1159.2" cy="672" r="6"/>
  <path d="M1156.2 673.6 Q1159.2 676.6 1162.2 673.6"/>
  <path d="M1185 676 Q1186.3 674.8 1186.3 672 Q1186.3 667.2 1189.4 667.2 Q1192.5 667.2 1192.5 672 Q1192.5 674.8 1193.8 676 Z" stroke-linejoin="round"/>
</g>
<g fill="#FFFFFF">
  <path d="M96.8 672.2 H101.8 L99.3 675 Z M86.8 673.8 H91.8 L89.3 671 Z"/>
  <rect x="150.7" y="669.6" width="1.2" height="4.2"/><rect x="150.7" y="675" width="1.2" height="1.2"/>
  <circle cx="1157.2" cy="670.6" r="0.8"/><circle cx="1161.2" cy="670.6" r="0.8"/>
  <path d="M1188 677.4 H1190.8 Q1190.6 678.8 1189.4 678.8 Q1188.2 678.8 1188 677.4 Z"/>
</g>
</svg>
<svg class="r" style="left:200px;top:661px;" width="30" height="21" viewBox="200 661 30 21">
<path d="M209.6 682 V677.8 Q209.6 676 211 676 Q212.4 676 212.4 677.8 V680.5 Q213.5 680 214.6 680.6 Q216 680.2 217.2 681 V682 Z" fill="#FFFFFF" stroke="#000000" stroke-width="1"/>
</svg>
</body></html>
